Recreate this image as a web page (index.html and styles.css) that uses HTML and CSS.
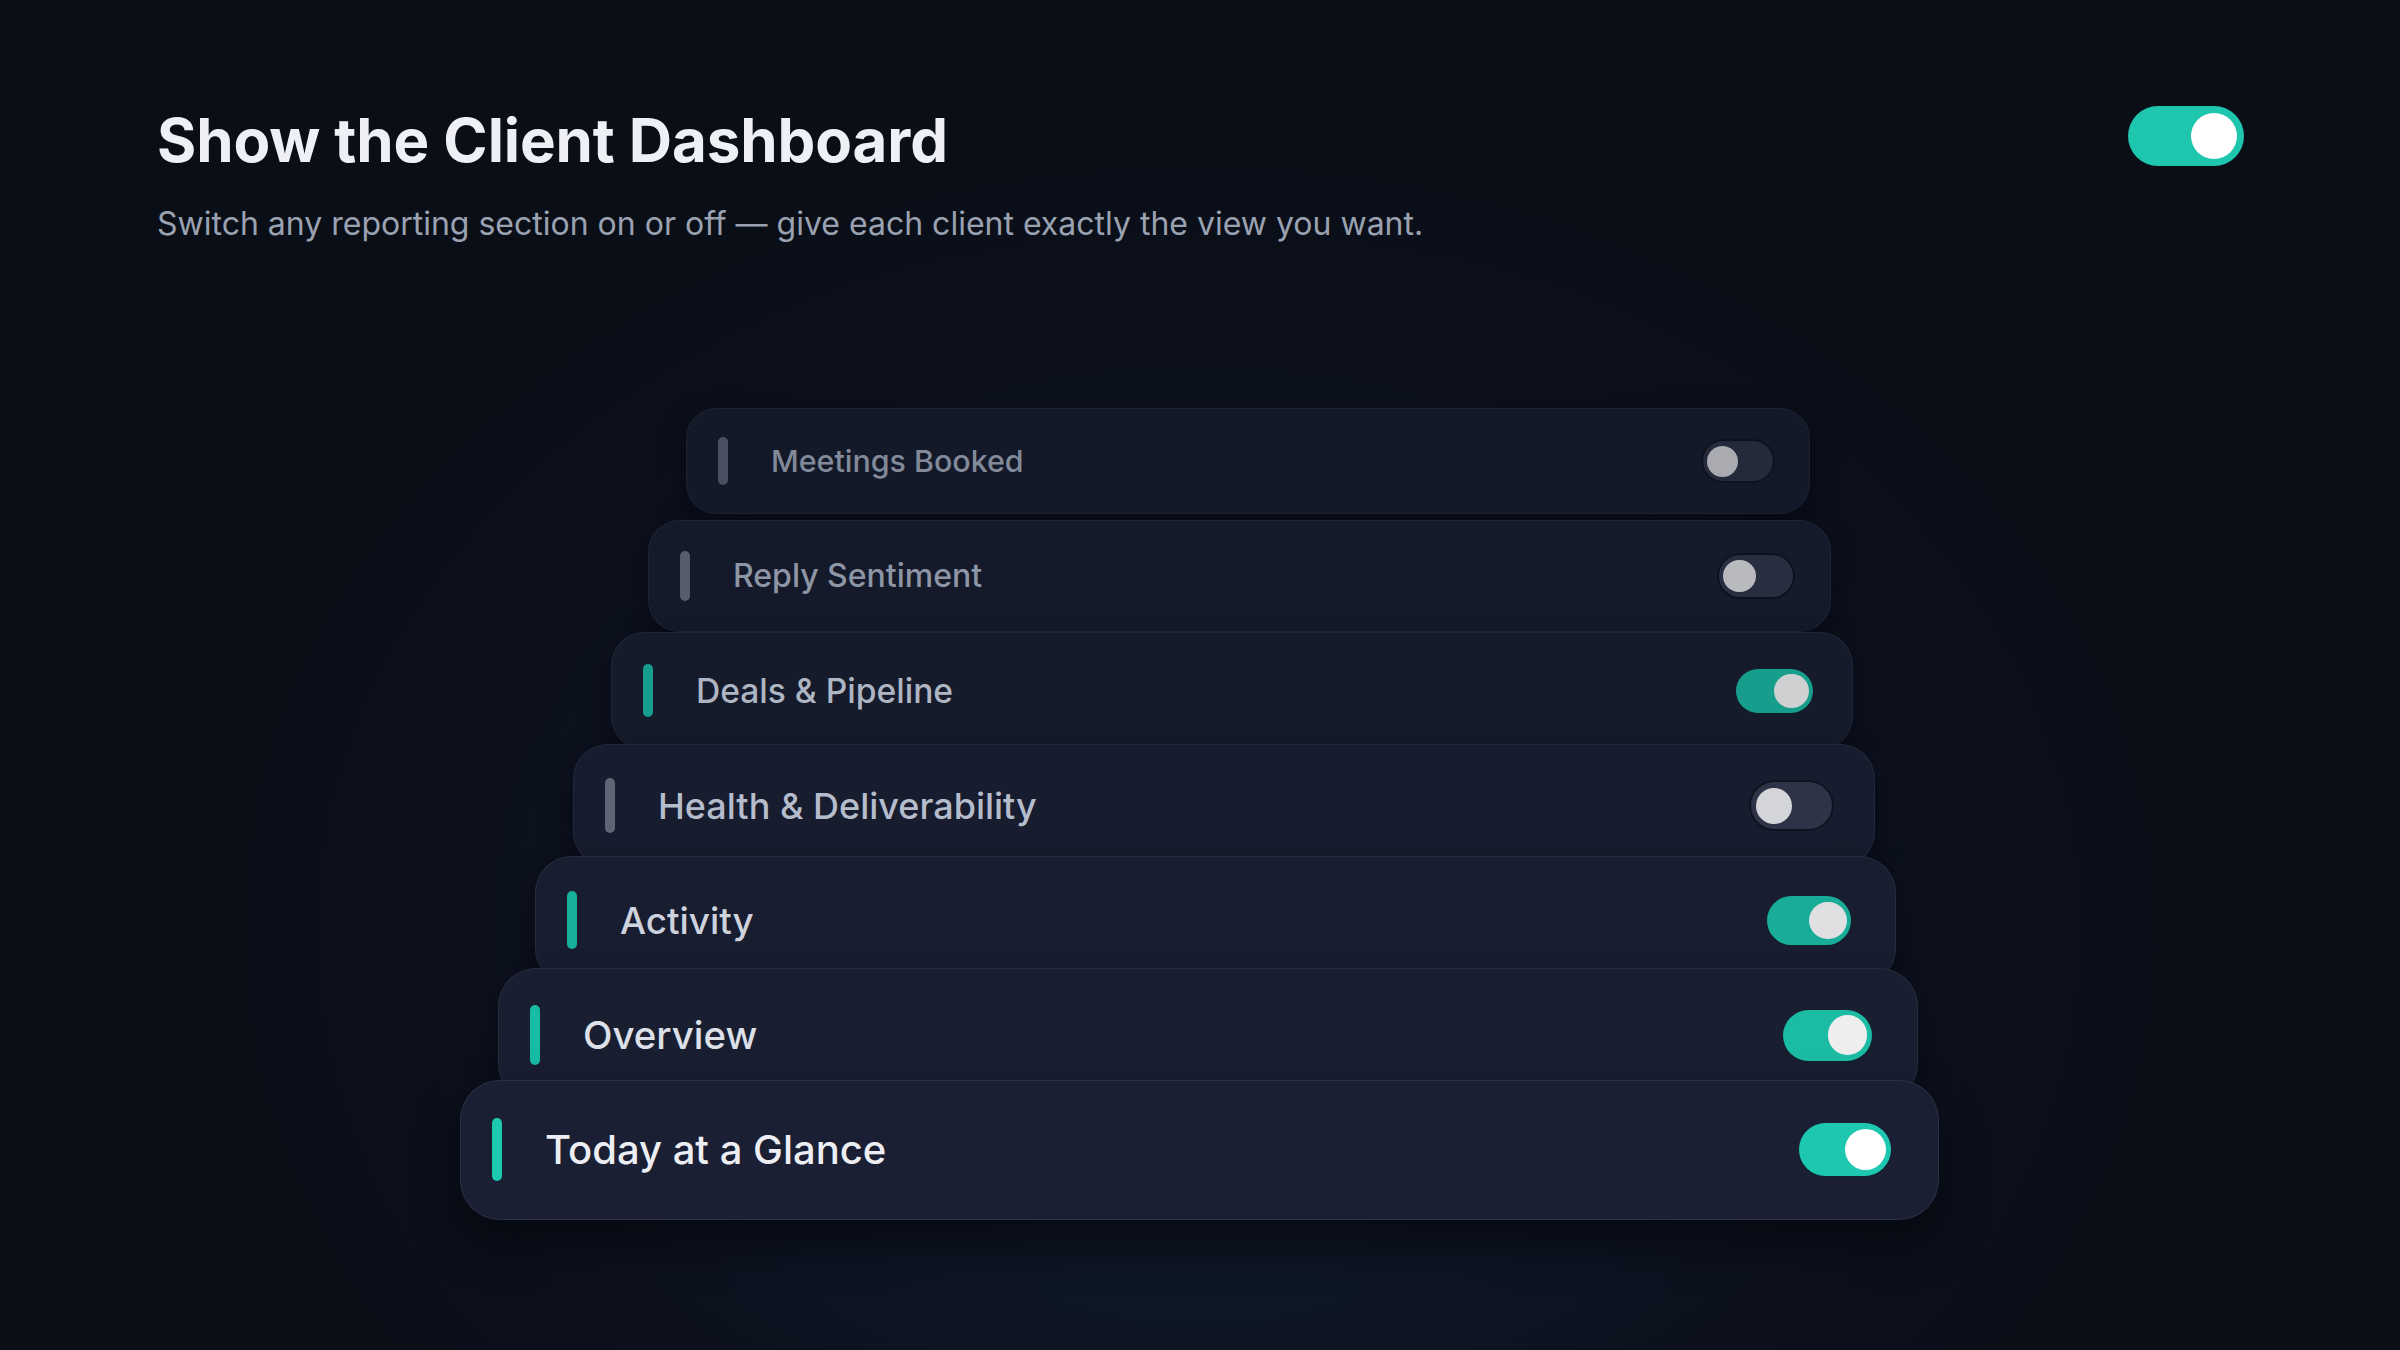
FILE: index.html
```html
<!DOCTYPE html>
<html lang="en">
<head>
<meta charset="utf-8">
<title>Show the Client Dashboard</title>
<link rel="stylesheet" href="styles.css">
</head>
<body>
<div class="page">
  <header class="header">
    <div class="heading">
      <h1 class="title">Show the Client Dashboard</h1>
      <p class="subtitle">Switch any reporting section on or off — give each client exactly the view you want.</p>
    </div>
    <span class="master-switch"><span class="master-knob"></span></span>
  </header>

  <div class="stack">
    <div class="card c1 off"><span class="bar"></span><span class="label">Meetings Booked</span><span class="switch"><span class="knob"></span></span></div>
    <div class="card c2 off"><span class="bar"></span><span class="label">Reply Sentiment</span><span class="switch"><span class="knob"></span></span></div>
    <div class="card c3 on"><span class="bar"></span><span class="label">Deals &amp; Pipeline</span><span class="switch"><span class="knob"></span></span></div>
    <div class="card c4 off"><span class="bar"></span><span class="label">Health &amp; Deliverability</span><span class="switch"><span class="knob"></span></span></div>
    <div class="card c5 on"><span class="bar"></span><span class="label">Activity</span><span class="switch"><span class="knob"></span></span></div>
    <div class="card c6 on"><span class="bar"></span><span class="label">Overview</span><span class="switch"><span class="knob"></span></span></div>
    <div class="card c7 on"><span class="bar"></span><span class="label">Today at a Glance</span><span class="switch"><span class="knob"></span></span></div>
  </div>
</div>
</body>
</html>
```

FILE: styles.css
```css
html, body {
  margin: 0;
  padding: 0;
}

body {
  width: 2400px;
  height: 1350px;
  overflow: hidden;
  font-family: Inter, "Noto Sans", "Liberation Sans", sans-serif;
  background-color: #0a0e17;
  background-image:
    radial-gradient(ellipse 520px 120px at 1200px 1290px, rgba(20, 160, 150, 0.035), rgba(20, 160, 150, 0) 100%),
    radial-gradient(ellipse 980px 780px at 1200px 930px, #0f1422 0%, #0d1220 60%, #0a0e17 100%);
}

.page {
  box-sizing: border-box;
  width: 2400px;
  height: 1350px;
  padding: 104px 156px 0 157px;
}

.header {
  display: flex;
  justify-content: space-between;
  align-items: flex-start;
}

.title {
  margin: 0;
  font-size: 60px;
  line-height: 72px;
  font-weight: 700;
  color: #eef0f6;
  letter-spacing: -0.1px;
}

.subtitle {
  margin: 28px 0 0;
  font-size: 32px;
  line-height: 40px;
  font-weight: 400;
  color: #9aa2b1;
}

.master-switch {
  margin-top: 2px;
  width: 116px;
  height: 60px;
  border-radius: 30px;
  background: #1fc6ae;
  display: flex;
  align-items: center;
  justify-content: flex-end;
  padding: 0 7px;
  box-sizing: border-box;
}

.master-knob {
  width: 46px;
  height: 46px;
  border-radius: 50%;
  background: #ffffff;
}

/* stacked cards */
.stack {
  margin-top: 164px;
  margin-left: 303px;
  display: flex;
  flex-direction: column;
  align-items: flex-start;
}

.card {
  box-sizing: border-box;
  display: flex;
  align-items: center;
  width: calc(1479px * var(--s));
  height: calc(140px * var(--s));
  margin-left: var(--ml);
  margin-bottom: calc(112px - 140px * var(--s));
  padding-left: 31px;
  padding-right: calc(47px * var(--s));
  border-radius: calc(40px * var(--s));
  background: var(--bg);
  border: 1px solid var(--line);
  box-shadow: 0 10px 28px rgba(3, 5, 10, 0.45);
  flex-shrink: 0;
}

.bar {
  width: 10px;
  height: calc(63px * var(--s));
  border-radius: 5px;
  background: var(--bar);
  flex-shrink: 0;
}

.label {
  flex: 1;
  margin-left: 43px;
  font-size: calc(40px * var(--s));
  font-weight: 500;
  color: var(--fg);
  white-space: nowrap;
}

.switch {
  box-sizing: border-box;
  display: flex;
  align-items: center;
  width: calc(92px * var(--s));
  height: calc(53px * var(--s));
  border-radius: 999px;
  padding: 0 calc(5px * var(--s));
  background: var(--track);
  flex-shrink: 0;
}

.off .switch {
  justify-content: flex-start;
  box-shadow: 0 0 0 2px rgba(10, 13, 22, 0.55);
}

.on .switch {
  justify-content: flex-end;
  box-shadow: 0 2px 0 rgba(6, 40, 40, 0.35);
}

.knob {
  width: calc(41px * var(--s));
  height: calc(41px * var(--s));
  border-radius: 50%;
  background: var(--knob);
}

.c1 { --s: 0.76; --ml: 226px; --bg: #141929; --line: rgba(255,255,255,0.045); --fg: #828a9a; --bar: #4a5062; --track: #252a3b; --knob: #a9abb0; }
.c2 { --s: 0.80; --ml: 188px; --bg: #151a2a; --line: rgba(255,255,255,0.05); --fg: #8e95a5; --bar: #565c6c; --track: #282d3f; --knob: #b8babe; }
.c3 { --s: 0.84; --ml: 151px; --bg: #161b2c; --line: rgba(255,255,255,0.055); --fg: #aeb5c3; --bar: #169d8c; --track: #179d8c; --knob: #cfd0d2; }
.c4 { --s: 0.88; --ml: 113px; --bg: #171c2e; --line: rgba(255,255,255,0.06); --fg: #b5bccb; --bar: #5f6575; --track: #2e3347; --knob: #d4d5d8; }
.c5 { --s: 0.92; --ml: 75px;  --bg: #181d30; --line: rgba(255,255,255,0.065); --fg: #cdd2dd; --bar: #17b09b; --track: #19ad99; --knob: #e0e0e2; }
.c6 { --s: 0.96; --ml: 38px;  --bg: #191e31; --line: rgba(255,255,255,0.07); --fg: #dde0e8; --bar: #18bba4; --track: #1bbba4; --knob: #eeeeee; }
.c7 { --s: 1;    --ml: 0px;   --bg: #1a1f33; --line: rgba(255,255,255,0.08); --fg: #eceef4; --bar: #1cc8ae; --track: #1ec8b0; --knob: #ffffff; box-shadow: 0 22px 44px rgba(3, 5, 10, 0.6); }
.c4 .label { font-size: 36px; }
```
